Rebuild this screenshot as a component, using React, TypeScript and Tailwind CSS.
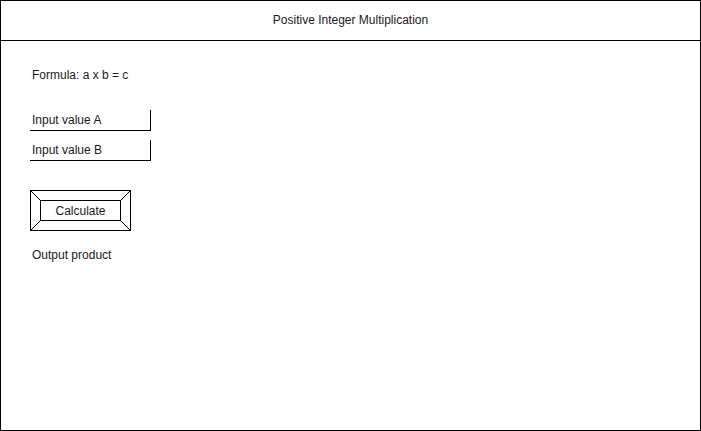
import React from "react"

function InputLine({ label }: { label: string }) {
  return (
    <div className="flex h-[21px] w-[121px] items-center border-b border-r border-black pl-[2px] text-[12px] leading-[14px] text-[#1a1a1a]">
      {label}
    </div>
  )
}

function BevelButton({ label }: { label: string }) {
  return (
    <div className="relative h-[41px] w-[101px]">
      <svg className="absolute inset-0" width="101" height="41" viewBox="0 0 101 41">
        <g stroke="#000" strokeWidth="1" fill="none" shapeRendering="crispEdges">
          <rect x="0.5" y="0.5" width="100" height="40" />
          <rect x="10.5" y="10.5" width="80" height="20" />
        </g>
        <g stroke="#000" strokeWidth="1" fill="none">
          <line x1="0.5" y1="0.5" x2="10.5" y2="10.5" />
          <line x1="100.5" y1="0.5" x2="90.5" y2="10.5" />
          <line x1="0.5" y1="40.5" x2="10.5" y2="30.5" />
          <line x1="100.5" y1="40.5" x2="90.5" y2="30.5" />
        </g>
      </svg>
      <div className="relative flex h-full w-full items-center justify-center text-[12px] leading-[14px] text-[#1a1a1a]">
        {label}
      </div>
    </div>
  )
}

export default function App() {
  return (
    <div className="h-[431px] w-[701px] bg-white" style={{ fontFamily: '"Liberation Sans", Arial, sans-serif' }}>
      <div className="flex h-full w-full flex-col border border-black">
        <div className="flex h-[40px] items-center justify-center border-b border-black pb-[1px] text-[12px] leading-[14px] text-[#1a1a1a]">
          Positive Integer Multiplication
        </div>
        <div className="flex flex-col items-start pl-[29px] pt-[27px]">
          <div className="pl-[2px] text-[12px] leading-[14px] text-[#1a1a1a]">Formula: a x b = c</div>
          <div className="mt-[28px]">
            <InputLine label="Input value A" />
          </div>
          <div className="mt-[9px]">
            <InputLine label="Input value B" />
          </div>
          <div className="mt-[29px]">
            <BevelButton label="Calculate" />
          </div>
          <div className="mt-[17px] pl-[2px] text-[12px] leading-[14px] text-[#1a1a1a]">Output product</div>
        </div>
      </div>
    </div>
  )
}
